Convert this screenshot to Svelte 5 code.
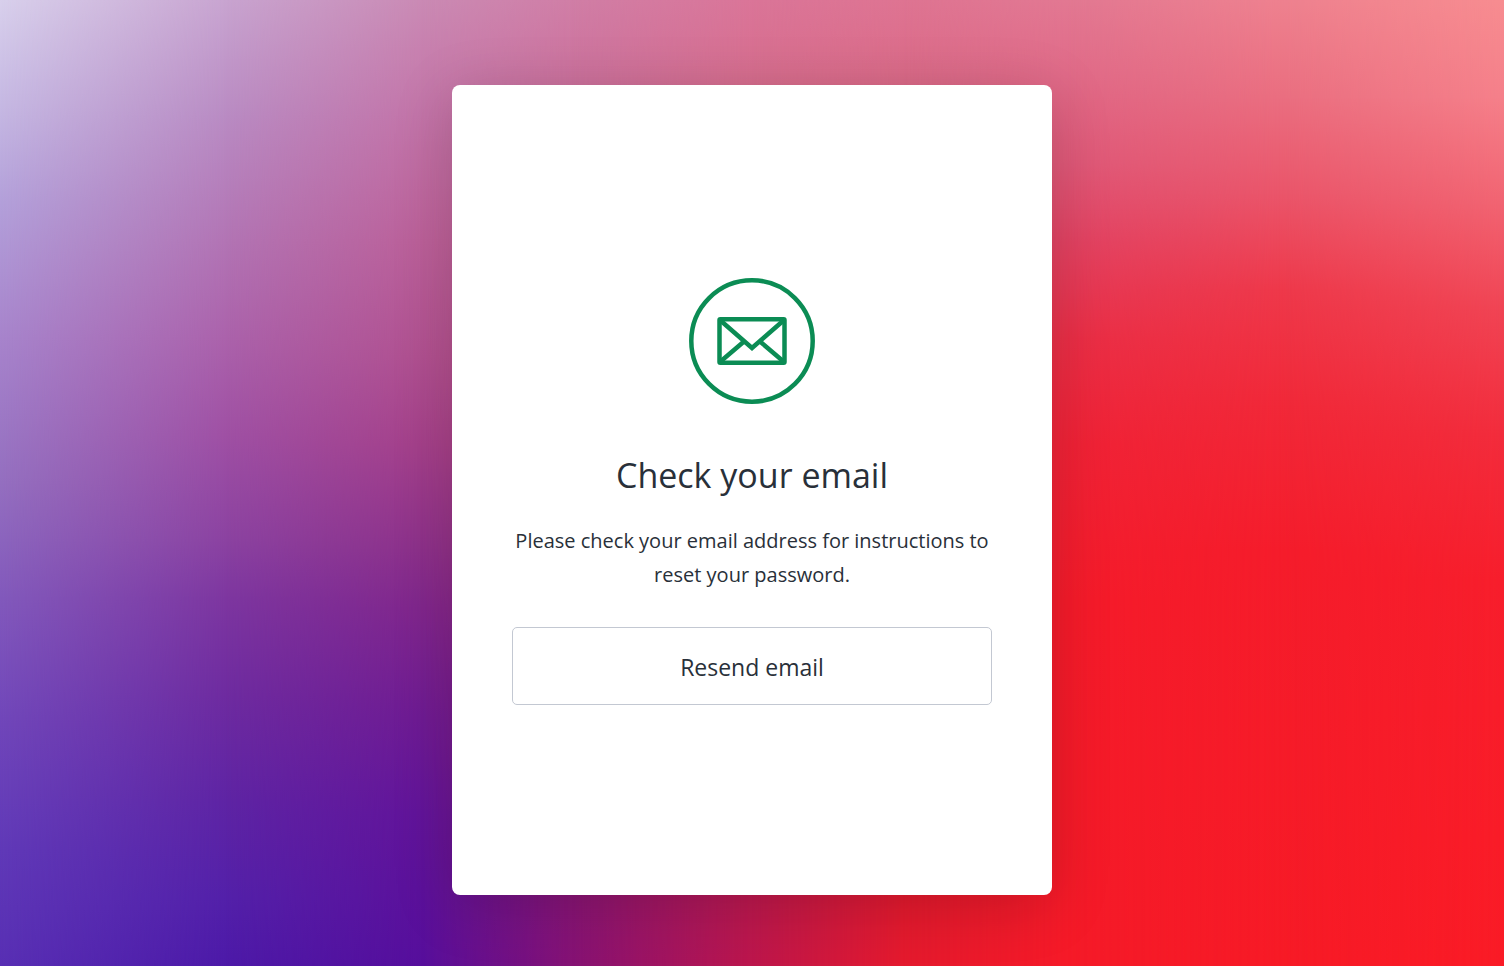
<script>
  // Colour mesh: each column is a vertical gradient that fades in over the previous one.
  const mesh = [
    { x: 0, stops: '#d8d0ec 0%, #c4b6e2 12%, #b3a0da 21%, #a784cc 35%, #946fc0 50%, #8259bc 62%, #7046ba 75%, #6039b8 88%, #582fb4 100%' },
    { x: 15, stops: '#c8a4d0 0%, #b98bc3 12%, #b274b4 25%, #ab62ab 35%, #9f50a4 45%, #8b42a1 56%, #7d36a0 62%, #6e2ba0 72%, #5e24a4 83%, #5320a9 93%, #4c19a8 100%' },
    { x: 28, stops: '#ca8ab4 0%, #c374a8 12%, #bb6099 25%, #b05090 37%, #a4408a 46%, #8c308a 57%, #80268c 63%, #701c92 73%, #62149a 84%, #560e9c 100%' },
    { x: 38, stops: '#d07ea6 0%, #ca6c99 12%, #be4c80 40%, #901c78 70%, #851274 100%' },
    { x: 50, stops: '#da7598 0%, #d66c8c 10%, #c83c60 45%, #bc1c50 80%, #bc164c 100%' },
    { x: 60, stops: '#de7492 0%, #da6886 10%, #e03850 40%, #e01a2e 80%, #e41a2e 100%' },
    { x: 71, stops: '#e27892 0%, #e06a88 8%, #df5878 17%, #e24262 25%, #ea2e46 35%, #f02236 46%, #f51b2a 62%, #f51a28 100%' },
    { x: 85, stops: '#ee818f 0%, #ea6e80 10%, #ea556a 20%, #ee384a 30%, #f12838 42%, #f51c2b 57%, #f71a26 100%' },
    { x: 100, stops: '#f78c90 0%, #f5808a 10%, #f16472 21%, #f04454 32%, #f22c3c 45%, #f71e2c 60%, #fa1b26 100%' }
  ];

  function layerStyle(column, index) {
    const fill = `background-image: linear-gradient(to bottom, ${column.stops});`;
    if (index === 0) return fill;
    return `${fill} mask-image: linear-gradient(to right, transparent ${mesh[index - 1].x}%, #000 ${column.x}%);`;
  }
</script>

<div class="page">
  <div class="backdrop" aria-hidden="true">
    {#each mesh as column, index}
      <div class="layer" style={layerStyle(column, index)}></div>
    {/each}
  </div>

  <main class="card">
    <svg class="icon" viewBox="0 0 126 126" fill="none" stroke="currentColor" stroke-width="4.5" aria-hidden="true">
      <circle cx="63" cy="63" r="60.7" />
      <rect x="30.5" y="41.3" width="65" height="43.5" rx="0.8" />
      <path d="M31.5 42.5 63 70 94.5 42.5M31.5 83.5 55 63.5M94.5 83.5 71 63.5" />
    </svg>
    <h1>Check your email</h1>
    <p>Please check your email address for instructions to reset your password.</p>
    <button type="button">Resend email</button>
  </main>
</div>

<style>
  :global(body) {
    margin: 0;
  }

  .page {
    position: relative;
    display: flex;
    justify-content: center;
    align-items: center;
    box-sizing: border-box;
    min-height: 100vh;
    padding: 84px 24px 70px;
    font-family: "Segoe UI", "Open Sans", "Noto Sans", sans-serif;
    color: #293039;
  }

  .backdrop,
  .layer {
    position: absolute;
    inset: 0;
  }

  .card {
    position: relative;
    display: flex;
    flex-direction: column;
    align-items: center;
    justify-content: center;
    box-sizing: border-box;
    width: 100%;
    max-width: 600px;
    min-height: 810px;
    padding: 63px 60px 60px;
    border-radius: 8px;
    background: #fff;
    box-shadow: 0 10px 60px rgba(0, 0, 0, 0.17);
    text-align: center;
  }

  .icon {
    width: 126px;
    height: 126px;
    color: #0b8c54;
  }

  h1 {
    margin: 45px 0 0;
    font-size: 34px;
    line-height: 52px;
    font-weight: 400;
  }

  p {
    margin: 23px 0 0;
    font-size: 20px;
    line-height: 34px;
  }

  button {
    width: 100%;
    height: 78px;
    margin-top: 35px;
    padding: 2px 0 0;
    border: 1px solid #c3c8d2;
    border-radius: 5px;
    background: #fff;
    color: inherit;
    font-family: inherit;
    font-size: 23px;
    cursor: pointer;
  }
</style>
